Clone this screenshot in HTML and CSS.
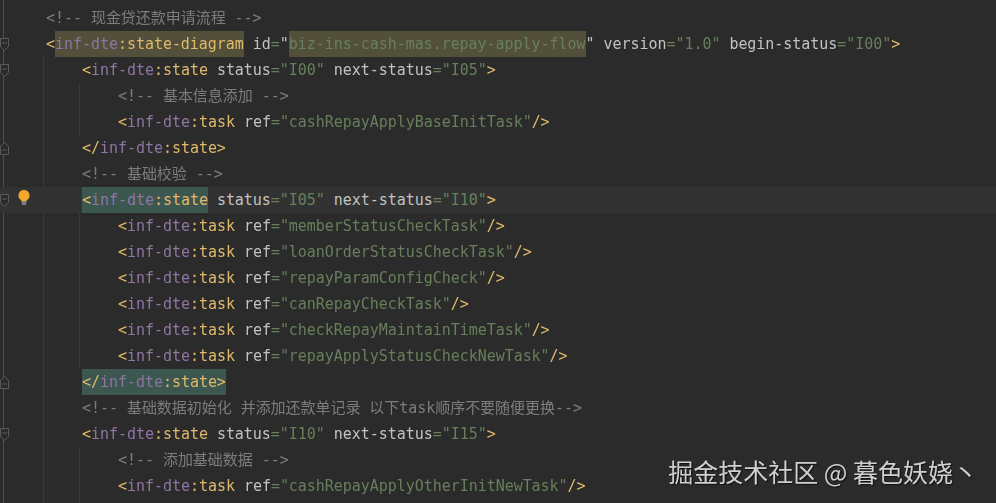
FILE: index.html
```html
<!DOCTYPE html>
<html lang="zh">
<head>
<meta charset="utf-8">
<title>XML</title>
<link rel="stylesheet" href="styles.css">
</head>
<body>
<main class="editor">
  <i class="guide guide-fold"></i>
  <i class="guide guide-root"></i>
  <i class="guide guide-a"></i>
  <i class="guide guide-b"></i>
  <i class="guide guide-c"></i>
  <div class="code">
    <div class="line"><span class="c">&lt;!-- 现金贷还款申请流程 --&gt;</span></div>
    <div class="line"><svg class="fold" viewBox="0 0 9 13"><path d="M.5.5h8v8l-4 4-4-4zM2 5h5"/></svg><span class="t">&lt;</span><span class="hl olive"><span class="n">inf-dte</span><span class="t">:state-diagram</span></span> <span class="a">id</span><span class="v">=</span><span class="a">"</span><span class="hl olive"><span class="v">biz-ins-cash-mas.repay-apply-flow</span></span><span class="a">"</span> <span class="a">version</span><span class="v">="1.0"</span> <span class="a">begin-status</span><span class="v">="I00"</span><span class="t">&gt;</span></div>
    <div class="line i1"><svg class="fold" viewBox="0 0 9 13"><path d="M.5.5h8v8l-4 4-4-4zM2 5h5"/></svg><span class="t">&lt;</span><span class="n">inf-dte</span><span class="t">:state</span> <span class="a">status</span><span class="v">="I00"</span> <span class="a">next-status</span><span class="v">="I05"</span><span class="t">&gt;</span></div>
    <div class="line i2"><span class="c">&lt;!-- 基本信息添加 --&gt;</span></div>
    <div class="line i2"><span class="t">&lt;</span><span class="n">inf-dte</span><span class="t">:task</span> <span class="a">ref</span><span class="v">="cashRepayApplyBaseInitTask"</span><span class="t">/&gt;</span></div>
    <div class="line i1"><svg class="fold" viewBox="0 0 9 13"><path d="M.5 12.5h8v-8l-4-4-4 4zM2 8h5"/></svg><span class="t">&lt;/</span><span class="n">inf-dte</span><span class="t">:state&gt;</span></div>
    <div class="line i1"><span class="c">&lt;!-- 基础校验 --&gt;</span></div>
    <div class="line i1 current"><svg class="fold" viewBox="0 0 9 13"><path d="M.5.5h8v8l-4 4-4-4zM2 5h5"/></svg><svg class="bulb" viewBox="0 0 12 15"><path class="bulb-glass" d="M6 0a5.5 5.5 0 0 0-3.2 10L3.400 11h5.200l.6-1A5.500 5.500 0 0 0 6 0z"/><path class="bulb-base" d="M3.500 12h5M4 14h4"/></svg><span class="hl green"><span class="t">&lt;</span><span class="n">inf-dte</span><span class="t">:state</span></span> <span class="a">status</span><span class="v">="I05"</span> <span class="a">next-status</span><span class="v">="I10"</span><span class="t">&gt;</span></div>
    <div class="line i2"><span class="t">&lt;</span><span class="n">inf-dte</span><span class="t">:task</span> <span class="a">ref</span><span class="v">="memberStatusCheckTask"</span><span class="t">/&gt;</span></div>
    <div class="line i2"><span class="t">&lt;</span><span class="n">inf-dte</span><span class="t">:task</span> <span class="a">ref</span><span class="v">="loanOrderStatusCheckTask"</span><span class="t">/&gt;</span></div>
    <div class="line i2"><span class="t">&lt;</span><span class="n">inf-dte</span><span class="t">:task</span> <span class="a">ref</span><span class="v">="repayParamConfigCheck"</span><span class="t">/&gt;</span></div>
    <div class="line i2"><span class="t">&lt;</span><span class="n">inf-dte</span><span class="t">:task</span> <span class="a">ref</span><span class="v">="canRepayCheckTask"</span><span class="t">/&gt;</span></div>
    <div class="line i2"><span class="t">&lt;</span><span class="n">inf-dte</span><span class="t">:task</span> <span class="a">ref</span><span class="v">="checkRepayMaintainTimeTask"</span><span class="t">/&gt;</span></div>
    <div class="line i2"><span class="t">&lt;</span><span class="n">inf-dte</span><span class="t">:task</span> <span class="a">ref</span><span class="v">="repayApplyStatusCheckNewTask"</span><span class="t">/&gt;</span></div>
    <div class="line i1"><svg class="fold" viewBox="0 0 9 13"><path d="M.5 12.500h8v-8l-4-4-4 4zM2 8h5"/></svg><span class="hl green"><span class="t">&lt;/</span><span class="n">inf-dte</span><span class="t">:state&gt;</span></span></div>
    <div class="line i1"><span class="c">&lt;!-- 基础数据初始化 并添加还款单记录 以下task顺序不要随便更换--&gt;</span></div>
    <div class="line i1"><svg class="fold" viewBox="0 0 9 13"><path d="M.5.5h8v8l-4 4-4-4zM2 5h5"/></svg><span class="t">&lt;</span><span class="n">inf-dte</span><span class="t">:state</span> <span class="a">status</span><span class="v">="I10"</span> <span class="a">next-status</span><span class="v">="I15"</span><span class="t">&gt;</span></div>
    <div class="line i2"><span class="c">&lt;!-- 添加基础数据 --&gt;</span></div>
    <div class="line i2"><span class="t">&lt;</span><span class="n">inf-dte</span><span class="t">:task</span> <span class="a">ref</span><span class="v">="cashRepayApplyOtherInitNewTask"</span><span class="t">/&gt;</span></div>
  </div>
  <div class="watermark">掘金技术社区 @ 暮色妖娆丶</div>
</main>
</body>
</html>
```
FILE: styles.css
```css
html, body {
  margin: 0;
  padding: 0;
  background: #2b2b2b;
}
.editor {
  position: relative;
  width: 996px;
  height: 503px;
  overflow: hidden;
  background: #2b2b2b;
}
.code {
  padding-top: 5px;
  font: 15px/27px "DejaVu Sans Mono", "Noto Sans CJK SC", monospace;
  letter-spacing: -0.04px;
  color: #bababa;
  filter: blur(0.35px);
}
.line {
  position: relative;
  height: 26px;
  padding-left: 46px;
  white-space: pre;
}
.i1 { padding-left: 82px; }
.i2 { padding-left: 118px; }
.current { background: #323232; }
.hl { display: inline-block; height: 26px; vertical-align: top; }
.olive { background: #52503a; }
.green { background: #3c5650; }
.t { color: #e0b96a; }
.n { color: #8f75a3; }
.a { color: #c2c2c2; }
.v { color: #687f5b; }
.c { color: #7d7d7d; }
.fold {
  position: absolute;
  left: 0;
  top: 7px;
  width: 9px;
  height: 13px;
}
.fold path {
  fill: #2b2b2b;
  stroke: #5a5a5a;
  stroke-width: 1;
}
.bulb {
  position: absolute;
  left: 18px;
  top: 3px;
  width: 12px;
  height: 15px;
}
.bulb-glass { fill: #f2a92e; }
.bulb-base { fill: none; stroke: #c9c9c9; stroke-width: 1.200; }
.guide {
  position: absolute;
  width: 1px;
  background: #3a3a3a;
}
.guide-fold { left: 3px; top: 0; bottom: 0; background: #4d4d4d; }
.guide-root { left: 43px; top: 57px; bottom: 0; }
.guide-a { left: 79px; top: 83px; height: 52px; }
.guide-b { left: 79px; top: 213px; height: 156px; }
.guide-c { left: 79px; top: 447px; bottom: 0; }
.watermark {
  position: absolute;
  right: 18px;
  bottom: 16px;
  font: 25px/32px "Noto Sans CJK SC", "Noto Sans", sans-serif;
  color: #d0d0d0;
  text-shadow: 1px 1px 1px #111;
  white-space: pre;
}
```
